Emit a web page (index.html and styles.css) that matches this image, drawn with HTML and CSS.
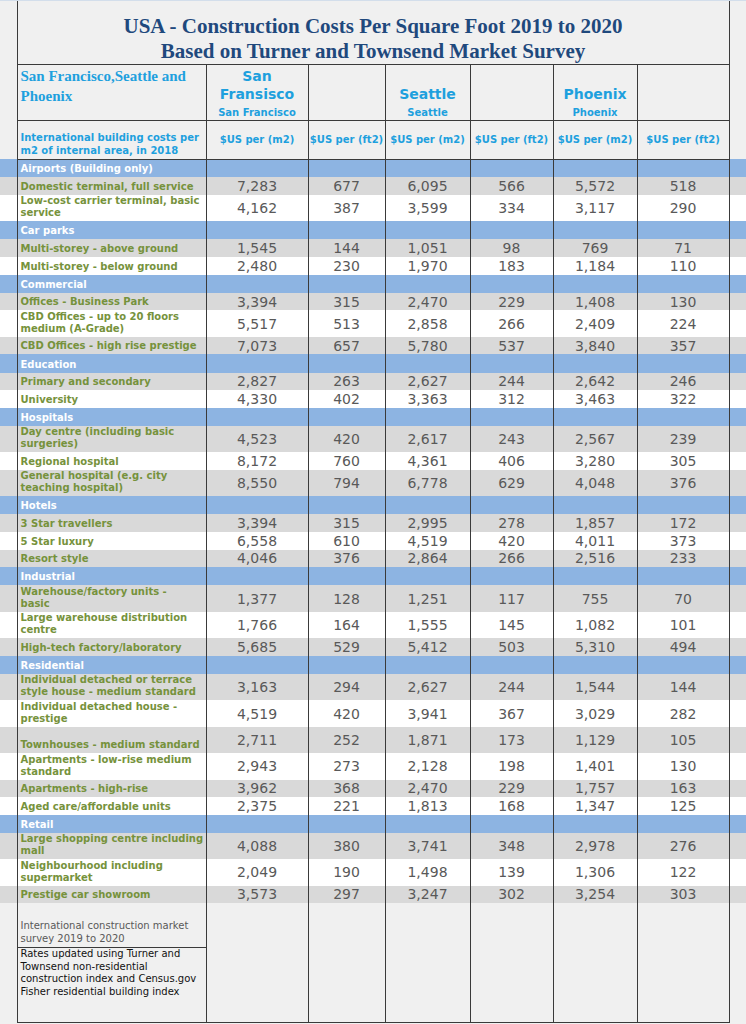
FILE: index.html
```html
<!DOCTYPE html>
<html lang="en">
<head>
<meta charset="utf-8">
<title>USA - Construction Costs Per Square Foot 2019 to 2020</title>
<link rel="stylesheet" href="styles.css">
</head>
<body>
<div class="topline"></div>
<table class="sheet">
  <colgroup>
    <col class="c-gut"><col class="c-label"><col class="c-sf1"><col class="c-sf2"><col class="c-se1"><col class="c-se2"><col class="c-ph1"><col class="c-ph2"><col class="c-gut">
  </colgroup>
  <tr class="r-title">
    <td class="gut"></td>
    <td class="cell title" colspan="7">USA - Construction Costs Per Square Foot 2019 to 2020<br>Based on Turner and Townsend Market Survey</td>
    <td class="gut"></td>
  </tr>
  <tr class="r-head1">
    <td class="gut"></td>
    <td class="cell hbox region">San Francisco,Seattle and<br>Phoenix</td>
    <td class="cell hbox city"><span class="big">San<br>Fransisco</span><span class="small">San Francisco</span></td>
    <td class="cell hbox"></td>
    <td class="cell hbox city"><span class="big">Seattle</span><span class="small">Seattle</span></td>
    <td class="cell hbox"></td>
    <td class="cell hbox city"><span class="big">Phoenix</span><span class="small">Phoenix</span></td>
    <td class="cell hbox"></td>
    <td class="gut"></td>
  </tr>
  <tr class="r-head2">
    <td class="gut"></td>
    <td class="cell hbox intl">International building costs per<br>m2 of internal area, in 2018</td>
    <td class="cell hbox unit">$US per (m2)</td>
    <td class="cell hbox unit">$US per (ft2)</td>
    <td class="cell hbox unit">$US per (m2)</td>
    <td class="cell hbox unit">$US per (ft2)</td>
    <td class="cell hbox unit">$US per (m2)</td>
    <td class="cell hbox unit">$US per (ft2)</td>
    <td class="gut"></td>
  </tr>
  <tbody id="data"></tbody>
  <tr class="r-note1">
    <td class="gut"></td>
    <td class="cell note1">International construction market<br>survey 2019 to 2020</td>
    <td class="cell endcol" rowspan="2"></td>
    <td class="cell endcol" rowspan="2"></td>
    <td class="cell endcol" rowspan="2"></td>
    <td class="cell endcol" rowspan="2"></td>
    <td class="cell endcol" rowspan="2"></td>
    <td class="cell endcol" rowspan="2"></td>
    <td class="gut"></td>
  </tr>
  <tr class="r-note2">
    <td class="gut"></td>
    <td class="cell note2">Rates updated using Turner and<br>Townsend non-residential<br>construction index and Census.gov<br>Fisher residential building index</td>
    <td class="gut"></td>
  </tr>
</table>
<script src="app.js"></script>
</body>
</html>
```

FILE: app.js
```javascript
const groups = [
  ["Airports (Building only)", [
    ["Domestic terminal, full service", 1, ["7,283","677","6,095","566","5,572","518"]],
    ["Low-cost carrier terminal, basic<br>service", 2, ["4,162","387","3,599","334","3,117","290"]]
  ]],
  ["Car parks", [
    ["Multi-storey - above ground", 1, ["1,545","144","1,051","98","769","71"]],
    ["Multi-storey - below ground", 1, ["2,480","230","1,970","183","1,184","110"]]
  ]],
  ["Commercial", [
    ["Offices - Business Park", 1, ["3,394","315","2,470","229","1,408","130"]],
    ["CBD Offices - up to 20 floors<br>medium (A-Grade)", 2, ["5,517","513","2,858","266","2,409","224"]],
    ["CBD Offices - high rise prestige", 1, ["7,073","657","5,780","537","3,840","357"]]
  ]],
  ["Education", [
    ["Primary and secondary", 1, ["2,827","263","2,627","244","2,642","246"]],
    ["University", 1, ["4,330","402","3,363","312","3,463","322"]]
  ]],
  ["Hospitals", [
    ["Day centre (including basic<br>surgeries)", 2, ["4,523","420","2,617","243","2,567","239"]],
    ["Regional hospital", 1, ["8,172","760","4,361","406","3,280","305"]],
    ["General hospital (e.g. city<br>teaching hospital)", 2, ["8,550","794","6,778","629","4,048","376"]]
  ]],
  ["Hotels", [
    ["3 Star travellers", 1, ["3,394","315","2,995","278","1,857","172"]],
    ["5 Star luxury", 1, ["6,558","610","4,519","420","4,011","373"]],
    ["Resort style", 1, ["4,046","376","2,864","266","2,516","233"]]
  ]],
  ["Industrial", [
    ["Warehouse/factory units -<br>basic", 2, ["1,377","128","1,251","117","755","70"]],
    ["Large warehouse distribution<br>centre", 2, ["1,766","164","1,555","145","1,082","101"]],
    ["High-tech factory/laboratory", 1, ["5,685","529","5,412","503","5,310","494"]]
  ]],
  ["Residential", [
    ["Individual detached or terrace<br>style house - medium standard", 2, ["3,163","294","2,627","244","1,544","144"]],
    ["Individual detached house -<br>prestige", 2, ["4,519","420","3,941","367","3,029","282"]],
    ["Townhouses - medium standard", 2, ["2,711","252","1,871","173","1,129","105"]],
    ["Apartments - low-rise medium<br>standard", 2, ["2,943","273","2,128","198","1,401","130"]],
    ["Apartments - high-rise", 1, ["3,962","368","2,470","229","1,757","163"]],
    ["Aged care/affordable units", 1, ["2,375","221","1,813","168","1,347","125"]]
  ]],
  ["Retail", [
    ["Large shopping centre including<br>mall", 2, ["4,088","380","3,741","348","2,978","276"]],
    ["Neighbourhood including<br>supermarket", 2, ["2,049","190","1,498","139","1,306","122"]],
    ["Prestige car showroom", 1, ["3,573","297","3,247","302","3,254","303"]]
  ]]
];

const body = document.getElementById("data");
let html = "";
for (const [name, rows] of groups) {
  html += '<tr class="r-band"><td class="gut"></td><td class="cell band-label">' + name + '</td>' +
    '<td class="cell"></td>'.repeat(6) + '<td class="gut"></td></tr>';
  rows.forEach(([label, lines, vals], i) => {
    const shade = i % 2 === 0 ? "grey" : "white";
    const size = lines === 2 ? "r-double" : "r-single";
    html += '<tr class="' + size + ' ' + shade + '"><td class="gut"></td><td class="cell label">' + label + '</td>' +
      vals.map(v => '<td class="cell num">' + v + '</td>').join("") + '<td class="gut"></td></tr>';
  });
}
body.innerHTML = html;
```

FILE: styles.css
```css
html, body {
  margin: 0;
  padding: 0;
}

body {
  background: #f0f0f0;
  font-family: "DejaVu Sans", Verdana, sans-serif;
  width: 746px;
  height: 1024px;
  overflow: hidden;
}

.topline {
  height: 1px;
  background: #d3deeb;
}

.sheet {
  border-collapse: collapse;
  table-layout: fixed;
  width: 746px;
}

.c-gut { width: 17px; }
.c-label { width: 189px; }
.c-sf1 { width: 102px; }
.c-sf2 { width: 77px; }
.c-se1 { width: 85px; }
.c-se2 { width: 83px; }
.c-ph1 { width: 84px; }
.c-ph2 { width: 92px; }

.sheet td {
  padding: 0;
}

.sheet td.cell {
  border-left: 1px solid #3a3a3a;
  border-right: 1px solid #3a3a3a;
}

/* Title */
.r-title { height: 63px; }

.title {
  font-family: "Liberation Serif", "Times New Roman", serif;
  font-weight: bold;
  font-size: 21px;
  line-height: 25px;
  color: #1f497d;
  text-align: center;
  vertical-align: bottom;
  border-bottom: 1px solid #3a3a3a;
}

/* Header rows */
.r-head1 { height: 56px; }
.r-head2 { height: 39px; }

.hbox {
  border-top: 1px solid #3a3a3a;
  border-bottom: 1px solid #3a3a3a;
  color: #1ea0de;
}

.region {
  font-family: "Liberation Serif", "Times New Roman", serif;
  font-weight: bold;
  font-size: 15px;
  line-height: 20px;
  vertical-align: top;
  padding: 1px 0 0 3px !important;
}

.city {
  text-align: center;
  vertical-align: bottom;
  padding-bottom: 1px !important;
  font-weight: bold;
}

.city .big {
  display: block;
  font-size: 14px;
  line-height: 18px;
}

.city .small {
  display: block;
  font-size: 10px;
  line-height: 13px;
  margin-top: 3px;
}

.intl {
  font-weight: bold;
  font-size: 10px;
  line-height: 13px;
  vertical-align: bottom;
  white-space: nowrap;
  padding: 0 0 2px 3px !important;
}

.unit {
  font-weight: bold;
  font-size: 10px;
  text-align: center;
  vertical-align: middle;
  white-space: nowrap;
}

/* Data rows */
.r-band { height: 18.2px; background: #8db4e2; }
.r-single { height: 17.6px; }
.r-double { height: 26.4px; }
.grey { background: #d9d9d9; }
.white { background: #ffffff; }

.band-label,
.label {
  font-weight: bold;
  font-size: 10px;
  line-height: 12px;
  vertical-align: bottom;
  white-space: nowrap;
  padding: 0 0 2px 3px !important;
}

.band-label { color: #ffffff; }
.label { color: #76923c; }

.num {
  font-size: 14px;
  line-height: 14px;
  color: #595959;
  text-align: center;
  vertical-align: middle;
}

/* Notes */
.r-note1 { height: 44px; }
.r-note2 { height: 75px; }

.note1 {
  font-size: 10px;
  line-height: 13px;
  color: #595959;
  vertical-align: bottom;
  white-space: nowrap;
  padding: 0 0 2px 3px !important;
  border-bottom: 1px solid #3a3a3a;
}

.note2 {
  font-size: 10px;
  line-height: 12.8px;
  color: #111111;
  vertical-align: top;
  white-space: nowrap;
  padding: 0 0 0 3px !important;
  border-bottom: 1px solid #3a3a3a;
}

.endcol {
  border-bottom: 1px solid #3a3a3a;
}
```
